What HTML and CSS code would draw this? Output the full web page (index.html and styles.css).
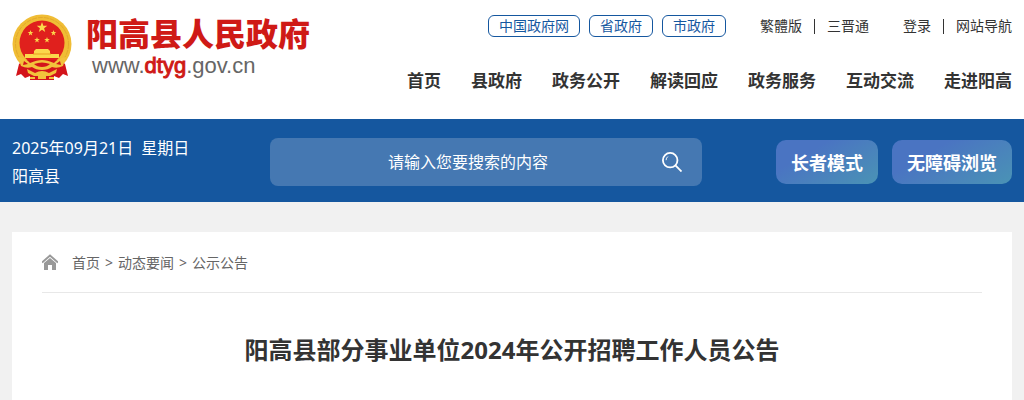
FILE: index.html
```html
<!DOCTYPE html>
<html lang="zh-CN">
<head>
    <meta charset="UTF-8">
    <meta name="viewport" content="width=device-width, initial-scale=1.0">
    <title>阳高县部分事业单位2024年公开招聘工作人员公告</title>
    <link rel="stylesheet" href="styles.css">
</head>
<body>
    <header class="header">
        <div class="container header-inner">
            <a class="logo" href="#">
                <svg class="emblem" viewBox="0 0 60 66" aria-hidden="true">
                    <defs>
                        <path id="star" d="M0-5 1.2-1.6 4.8-1.6 1.9.6 2.9 4 0 2-2.9 4-1.9.6-4.8-1.6-1.2-1.6z"/>
                    </defs>
                    <!-- wreath and disc -->
                    <circle cx="30" cy="30" r="29.5" fill="#f0bd35"/>
                    <circle cx="30" cy="30" r="26.500" fill="none" stroke="#e3a92c" stroke-dasharray="5 1"/>
                    <circle cx="30" cy="29" r="22.5" fill="#e0201d"/>
                    <g fill="#fbd84b">
                        <use href="#star" transform="translate(30 13.500) scale(1.1)"/>
                        <use href="#star" transform="translate(18.500 19) scale(.6)"/>
                        <use href="#star" transform="translate(41.500 19) scale(.6)"/>
                        <use href="#star" transform="translate(25 26) scale(.6)"/>
                        <use href="#star" transform="translate(35 26) scale(.6)"/>
                        <path d="M22 37 24 35H36L38 37V40H47V44H13V40H22z"/>
                    </g>
                    <path stroke="#e89f20" d="M21 40H39"/>
                    <!-- ribbons -->
                    <path fill="#d3141b" d="M7 50 12 46H48L53 50 56 62 51 60 47 64 42 62V66H18V62L13 64 9 60 4 62z"/>
                    <g fill="#f2c23c">
                        <path d="M6 43Q14 44 18 49Q25 46 30 46Q35 46 42 49Q46 44 54 43L51 52Q45 55 40 53Q36 56 30 56Q24 56 20 53Q15 55 9 52z"/>
                        <path d="M15 55 23 59Q30 55 37 59L45 55 44 59 38 62H34V65H26V62H22L16 59z"/>
                        <path d="M18 63H23V65H18zM37 63H42V65H37z"/>
                    </g>
                    <path fill="#d3141b" d="M22 50Q30 47 38 50Q35 53 30 53Q25 53 22 50zM12 47 16 50 11 51zM48 47 44 50 49 51z"/>
                </svg>
                <span class="logo-text">
                    <span class="logo-name">阳高县人民政府</span>
                    <span class="logo-url">www.<em>dtyg</em>.gov.cn</span>
                </span>
            </a>
            <div class="header-right">
                <div class="top-links">
                    <div class="gov-links">
                        <a href="#">中国政府网</a>
                        <a href="#">省政府</a>
                        <a href="#">市政府</a>
                    </div>
                    <div class="text-links">
                        <a href="#">繁體版</a>
                        <i></i>
                        <a href="#">三晋通</a>
                    </div>
                    <div class="text-links">
                        <a href="#">登录</a>
                        <i></i>
                        <a href="#">网站导航</a>
                    </div>
                </div>
                <nav class="nav">
                    <a href="#">首页</a>
                    <a href="#">县政府</a>
                    <a href="#">政务公开</a>
                    <a href="#">解读回应</a>
                    <a href="#">政务服务</a>
                    <a href="#">互动交流</a>
                    <a href="#">走进阳高</a>
                </nav>
            </div>
        </div>
    </header>

    <div class="banner">
        <div class="container banner-inner">
            <div class="date">
                <p><span>2025年09月21日</span> <span>星期日</span></p>
                <p>阳高县</p>
            </div>
            <form class="search">
                <input type="text" aria-label="搜索" placeholder="请输入您要搜索的内容">
                <button type="button" aria-label="搜索">
                    <svg viewBox="0 0 22 22" width="20" height="20" fill="none" stroke="#fff" stroke-width="2">
                        <circle cx="9" cy="9" r="8"/>
                        <path d="M14.500 14.500 21.500 21.500"/>
                        <path stroke-width="1" d="M4.500 9Q4.500 6.500 6.500 5"/>
                    </svg>
                </button>
            </form>
            <div class="modes">
                <button type="button">长者模式</button>
                <button type="button">无障碍浏览</button>
            </div>
        </div>
    </div>

    <main class="container content">
        <div class="crumbs">
            <svg viewBox="0 0 16 16" width="16" height="16" aria-hidden="true">
                <path fill="none" stroke="#999" stroke-width="2" d="M0 8.500 8 1.500 16 8.500"/>
                <path fill="#999" d="M8 4 14 9V16H10V11H6V16H2V9z"/>
            </svg>
            <div class="crumb-list">
                <a href="#">首页</a>
                <span>&gt;</span>
                <a href="#">动态要闻</a>
                <span>&gt;</span>
                <a href="#">公示公告</a>
            </div>
        </div>
        <h1>阳高县部分事业单位2024年公开招聘工作人员公告</h1>
    </main>
</body>
</html>
```
FILE: styles.css
```css
* {
    box-sizing: border-box;
    margin: 0;
    padding: 0;
}
body {
    font-family: "Noto Sans", "Noto Sans CJK SC", sans-serif;
    font-size: 14px;
    color: #333;
    background-color: #f1f1f1;
}
a {
    color: inherit;
    text-decoration: none;
}
.container {
    max-width: 1200px;
    margin: 0 auto;
    width: calc(100% - 24px);
}
.header {
    background-color: #fff;
}
.header-inner {
    display: flex;
    justify-content: space-between;
    align-items: flex-start;
    padding: 14px 0 24px;
}
.logo {
    display: flex;
    gap: 14px;
}
.emblem {
    width: 60px;
    height: 66px;
}
.logo-text {
    display: flex;
    flex-direction: column;
}
.logo-name {
    font-size: 32px;
    line-height: 40px;
    font-weight: 900;
    color: #cf1a16;
}
.logo-url {
    font-family: "Liberation Sans", Arial, sans-serif;
    font-size: 22px;
    line-height: 24px;
    padding-left: 6px;
    color: #666;
}
.logo-url em {
    font-style: normal;
    color: #cf1a16;
    -webkit-text-stroke: 1px #cf1a16;
}
.header-right {
    display: flex;
    flex-direction: column;
    align-items: flex-end;
    gap: 30px;
}
.top-links {
    display: flex;
    align-items: center;
    gap: 34px;
    padding-top: 1px;
    line-height: 20px;
}
.gov-links {
    display: flex;
    gap: 9px;
}
.gov-links a {
    padding: 0 10px;
    border: 1px solid #15579f;
    border-radius: 6px;
    color: #15579f;
}
.text-links {
    display: flex;
    align-items: center;
    gap: 12px;
}
.text-links i {
    width: 1px;
    height: 15px;
    background-color: #333;
}
.nav {
    display: flex;
    gap: 30px;
    font-size: 17px;
    line-height: 28px;
    font-weight: bold;
}
.banner {
    background-color: #15579f;
    color: #fff;
}
.banner-inner {
    display: flex;
    align-items: center;
    justify-content: space-between;
    padding: 15px 0 12px;
}
.date {
    flex: 1;
    font-size: 16px;
    line-height: 28px;
}
.date p {
    display: flex;
    gap: 8px;
}
.search {
    display: flex;
    width: 432px;
    height: 48px;
    margin-right: 74px;
    border-radius: 8px;
    background-color: #4578b2;
}
.search input {
    flex: 1;
    min-width: 0;
    padding-left: 24px;
    border: none;
    outline: none;
    background: none;
    font: inherit;
    font-size: 16px;
    text-align: center;
    color: #fff;
}
.search input::placeholder {
    color: #fff;
}
.search button {
    width: 60px;
    border: none;
    background: none;
    cursor: pointer;
}
.search svg {
    vertical-align: middle;
}
.modes {
    display: flex;
    gap: 14px;
}
.modes button {
    height: 44px;
    padding: 0 15px;
    border: none;
    border-radius: 10px;
    background: linear-gradient(150deg, #4a74c2 30%, #4a93b5);
    font: inherit;
    font-size: 18px;
    font-weight: bold;
    color: #fff;
    cursor: pointer;
}
.content {
    margin-top: 30px;
    padding: 0 30px 40px;
    background-color: #fff;
}
.crumbs {
    display: flex;
    align-items: center;
    gap: 14px;
    height: 61px;
    border-bottom: 1px solid #e8e8e8;
    color: #666;
}
.crumb-list {
    display: flex;
    align-items: baseline;
    gap: 5px;
}
h1 {
    margin-top: 39px;
    font-size: 24px;
    line-height: 36px;
    text-align: center;
}
```
